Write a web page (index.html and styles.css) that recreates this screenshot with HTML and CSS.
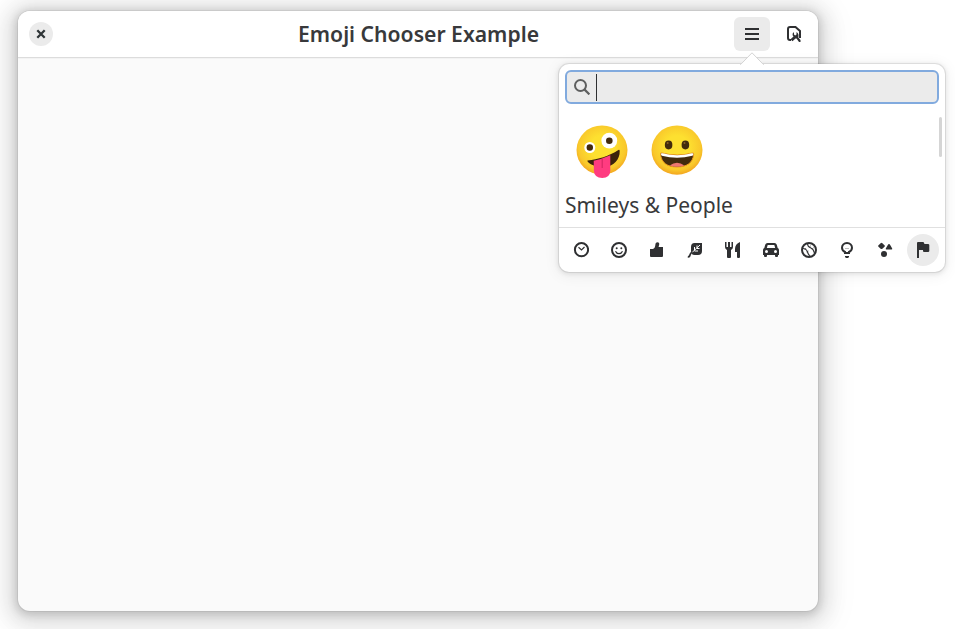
FILE: index.html
```html
<!DOCTYPE html>
<html lang="en">
<head>
<meta charset="utf-8">
<title>Emoji Chooser Example</title>
<link rel="stylesheet" href="styles.css">
</head>
<body>
<main class="window">
  <header class="headerbar">
    <button class="close" aria-label="Close"><svg width="16" height="16" viewBox="0 0 16 16"><path d="M4.300 4.300 11.700 11.700M11.700 4.300 4.300 11.700" stroke="#2e3436" stroke-width="2.300"/></svg></button>
    <h1 class="title">Emoji Chooser Example</h1>
    <div class="actions">
      <div class="menu">
        <button class="tool active" aria-label="Menu"><svg width="16" height="16" viewBox="0 0 16 16"><path d="M1 2h14v2H1zM1 7h14v2H1zM1 12h14v2H1z"/></svg></button>
        <section class="popover">
          <svg class="arrow" width="24" height="13" viewBox="0 0 24 13"><path d="M0 13 1 12 12 1 23 12 24 13z" fill="#fff"/><path d="M0 12.300H.8L12 .8 23.200 12.300h.8" fill="none" stroke="#d4d4d4"/><path d="M1.600 12.200h20.800V13H1.600z" fill="#fff"/></svg>
          <div class="search">
            <svg width="16" height="16" viewBox="0 0 16 16"><circle cx="6.500" cy="6.500" r="5.500" fill="none" stroke="#5e5f5f" stroke-width="2"/><path d="m10.400 10.400 5 5" stroke="#5e5f5f" stroke-width="2.200"/></svg>
            <span class="caret"></span>
          </div>
          <div class="content">
            <div class="emojis">
              <svg width="54" height="54" viewBox="0 0 54 54">
                <defs>
                  <radialGradient id="face" cx=".5" cy=".44" r=".58"><stop offset=".4" stop-color="#fde030"/><stop offset=".8" stop-color="#f9c82b"/><stop offset="1" stop-color="#f29f1d"/></radialGradient>
                </defs>
                <ellipse cx="27" cy="25.100" rx="25.500" ry="24.600" fill="url(#face)"/>
                <circle cx="14.800" cy="22.500" r="5.500" fill="#fff"/><circle cx="14.800" cy="22.500" r="3.200" fill="#422b0d"/>
                <circle cx="34.300" cy="15.700" r="7.900" fill="#fff"/><circle cx="34.300" cy="15.700" r="3.300" fill="#422b0d"/>
                <path d="M12.600 35.500C23 34.500 34 31.200 43.400 25Q44.600 24.500 44.700 25.900C45 34.500 38.500 41.600 29.500 41.600C20.500 42.100 14.500 39.500 12.300 36Z" fill="#3b220b"/>
                <path d="M18.700 35.700Q27 34 35.300 30.200V45.700Q35 52.800 27.300 53.100Q19.300 52.800 18.900 46Z" fill="#ff3b80"/><path d="M27.200 34v9" stroke="#d72865" stroke-width="1.200"/>
              </svg>
              <svg width="54" height="54" viewBox="0 0 54 54">
                <ellipse cx="27" cy="25.100" rx="25.500" ry="24.600" fill="url(#face)"/>
                <ellipse cx="18.600" cy="20" rx="3.800" ry="4.400" fill="#422b0d"/><ellipse cx="35.400" cy="20" rx="3.800" ry="4.400" fill="#422b0d"/>
                <circle cx="17.700" cy="18" r="1" fill="#896024"/><circle cx="34.500" cy="18" r="1" fill="#896024"/>
                <path d="M10.500 28.500Q10.500 27.700 12 28Q27 32 42.500 28Q43.800 27.700 43.700 29.200C43 38 36.500 42 27 42C17.500 42 11 37.800 10.500 28.500Z" fill="#422b0d" stroke="#ed971c"/>
                <path d="M10.800 28.800Q11 28 12.500 28.300Q27 32 41.900 28.300Q43.400 28 43.300 29.200Q43.200 30.500 42.300 30.700Q27 34.700 11.800 30.700Q11 30 10.800 28.800Z" fill="#fff"/>
                <path d="M19.700 40.600Q27 34.700 34.400 40.600Q27 43 19.700 40.600Z" fill="#ed7770"/>
              </svg>
            </div>
            <h2 class="section-title">Smileys &amp; People</h2>
            <span class="scrollbar"></span>
          </div>
          <nav class="categories">
            <button class="category" aria-label="Recent"><svg width="16" height="16" viewBox="0 0 16 16"><circle cx="8.500" cy="7.700" r="6.600" fill="none" stroke="#2f3032" stroke-width="2"/><path d="m5.500 5.300 3 2.700 3-3" fill="none" stroke="#2f3032" stroke-width="1.200"/></svg></button>
            <button class="category" aria-label="Smileys"><svg width="16" height="16" viewBox="0 0 16 16"><circle cx="8" cy="8" r="7" fill="none" stroke="#2f3032" stroke-width="2"/><circle cx="5.700" cy="6.200" r="1"/><circle cx="10.300" cy="6.200" r="1"/><path d="M4.500 9.300Q5.500 11.700 8 11.700T11.500 9.300" fill="none" stroke="#2f3032" stroke-width="1.200"/></svg></button>
            <button class="category" aria-label="Body"><svg width="16" height="16" viewBox="0 0 16 16"><path d="M1 7h2.800C5.500 6.400 6 5.200 6.300 3.200 6.500 1.200 7 .4 8.500.3c1.500 0 1.900 1 1.700 2.300L9.600 5H14v9q0 1-1 1H2q-1 0-1-1z"/></svg></button>
            <button class="category" aria-label="Nature"><svg width="16" height="16" viewBox="0 0 16 16"><path d="M4 5Q4 1 7.500 1H15v8q0 4-4 4H7.500Q4 13 4 9z"/><path d="M13 3 4.500 11M7.500 8.500V5M10 6V3.500M7.500 9h3.500M10 6.500h2.500" fill="none" stroke="#fff"/><path d="M5.500 10Q3.300 11 3 13T.8 14.800" fill="none" stroke="#2f3032" stroke-width="1.700"/></svg></button>
            <button class="category" aria-label="Food"><svg width="16" height="16" viewBox="0 0 16 16"><path d="M0 0h1.500v5H3V0h2v5h1.500V0H8v5Q8 7 6 8v7q0 1-1 1H3q-1 0-1-1V8Q0 7 0 5zM15 0v15q0 1-1 1h-1q-1 0-1-1v-5h-2V7q0-5 5-7z"/></svg></button>
            <button class="category" aria-label="Travel"><svg width="16" height="16" viewBox="0 0 16 16"><path fill-rule="evenodd" d="M4.500 1h7q1.700 0 2.300 1.800L14.700 6Q16 6.500 16 8v5h-1v1q0 1-1 1h-1q-1 0-1-1v-1H4v1q0 1-1 1H2q-1 0-1-1v-1H0V8q0-1.500 1.300-2l.9-3.200Q2.800 1 4.500 1ZM4.700 3 3.800 6h8.400l-.9-3zM3.500 8a1.500 1.500 0 1 0 0 3 1.500 1.500 0 0 0 0-3Zm9 0a1.500 1.500 0 1 0 0 3 1.500 1.500 0 0 0 0-3Z"/></svg></button>
            <button class="category" aria-label="Activities"><svg width="16" height="16" viewBox="0 0 16 16"><g fill="none" stroke="#2f3032"><circle cx="8" cy="8" r="7" stroke-width="2"/><path d="M6.500 1.500Q6.500 4.500 9.500 5.800T13.500 11M1.500 6.500Q5.500 6.500 6.500 10T9.500 14.500" stroke-width="1.100"/><path d="M9.500 3.500 8.500 5.500M12.500 5.500l-1.200 1.500M5 6l-1.200 1.500M7.500 9l-2 1" stroke-width=".6"/></g></svg></button>
            <button class="category" aria-label="Objects"><svg width="16" height="16" viewBox="0 0 16 16"><path d="M6 11V10Q3 8.600 3 5.800C3 3 5 1 8 1s5 2 5 4.800Q13 8.600 10 10v1z" fill="none" stroke="#2f3032" stroke-width="2"/><path d="M7 8h2v3H7z" fill="#fff"/><path d="M6 10h4v2H6zM6 14h4v1l-1 1H7l-1-1z"/><path d="m6 6 1 1 1-1 1 1 1-1" fill="none" stroke="#aaa" stroke-width=".8"/></svg></button>
            <button class="category" aria-label="Symbols"><svg width="16" height="16" viewBox="0 0 16 16"><path d="M4.500.7q.5 0 .9.500l2.300 2.200q.5.500 0 1L5.400 6.700q-.9.800-1.800 0L1.300 4.400q-.5-.5 0-1L3.600 1.200Q4 .7 4.500.7ZM12 2q.6 0 .9.500l2.300 4q.3 1-.6 1H9.400q-.9 0-.6-1l2.300-4Q11.400 2 12 2Z"/><circle cx="7" cy="12" r="3"/></svg></button>
            <button class="category selected" aria-label="Flags"><svg width="16" height="16" viewBox="0 0 16 16"><path d="M2 1q0-1 1-1h5q1 0 1 1h0q0 1 1 1h3q1.300 0 1.300 1v6q0 1-1.300 1H9Q8 10 8 9V8H4v8H2z"/></svg></button>
          </nav>
        </section>
      </div>
      <button class="tool" aria-label="Inspect"><svg width="16" height="16" viewBox="0 0 16 16"><path d="M5 14H4Q2 14 2 12V3Q2 1 4 1h5.500L14 5v7" fill="none" stroke="#2f3032" stroke-width="2"/><path d="M8 6Q6 7.500 6.600 9.200L7.500 10.500 4.500 13.300 6.500 15.300 9.500 12.400H10.500L13 16H14.500V14L12.300 11.500Q13.300 7.500 10.500 6V8.500L9.200 9.500 8 8.500z"/></svg></button>
    </div>
  </header>
</main>
</body>
</html>
```
FILE: styles.css
```css
* { box-sizing: border-box; }
body {
  margin: 0;
  padding: 11px 0 0 18px;
  height: 629px;
  overflow: hidden;
  background: #fff;
  color: #38393b;
  font-family: "Noto Sans", sans-serif;
}
svg { display: block; fill: #2f3032; flex: none; }
button {
  display: flex;
  align-items: center;
  justify-content: center;
  padding: 0;
  border: 0;
  background: transparent;
}
.window {
  width: 800px;
  height: 600px;
  border-radius: 12px;
  background: #fafafa;
  box-shadow: 0 0 0 1px rgba(0,0,0,.05), 0 2px 8px 2px rgba(0,0,0,.15), 0 3px 20px 10px rgba(0,0,0,.1), 0 6px 32px 16px rgba(0,0,0,.04);
}
.headerbar {
  display: grid;
  grid-template-columns: 1fr auto 1fr;
  align-items: center;
  height: 47px;
  padding: 0 6px 0 11px;
  border-bottom: 1px solid #dcdcdc;
  border-radius: 12px 12px 0 0;
  background: #fff;
  box-shadow: 0 1px 1px rgba(0,0,0,.03);
}
.close { width: 24px; height: 24px; border-radius: 50%; background: #ebebeb; }
.title {
  width: 241px;
  margin: 0 0 0 -4px;
  font-size: 21.150px;
  line-height: 30px;
  font-weight: 600;
  white-space: nowrap;
}
.actions { display: flex; justify-content: flex-end; gap: 6px; }
.menu { position: relative; }
.tool { width: 36px; height: 34px; border-radius: 6px; }
.active { background: #ebebeb; }
.popover {
  position: absolute;
  top: 47px;
  left: -175px;
  width: 386px;
  height: 208px;
  padding-top: 6px;
  border-radius: 10px;
  background: #fff;
  box-shadow: 0 0 0 1px rgba(0,0,0,.08), 0 1px 5px 1px rgba(0,0,0,.09), 0 2px 14px 3px rgba(0,0,0,.05);
}
.arrow { position: absolute; left: 181px; top: -12px; }
.search {
  display: flex;
  align-items: center;
  gap: 6px;
  height: 34px;
  margin: 0 6px;
  padding: 0 7px;
  border: 2px solid #81aade;
  border-radius: 6px;
  background: #ebebeb;
}
.caret { width: 1px; height: 27px; background: #2f3032; }
.content {
  position: relative;
  height: 123px;
  padding: 21px 6px 0;
}
.emojis { display: flex; gap: 21px; height: 65px; padding-left: 10px; }
.section-title {
  margin: 0;
  font-size: 21px;
  line-height: 30px;
  font-weight: 400;
  white-space: nowrap;
}
.scrollbar {
  position: absolute;
  top: 13px;
  right: 3px;
  width: 3px;
  height: 40px;
  border-radius: 2px;
  background: #d5d5d5;
}
.categories {
  display: flex;
  gap: 6px;
  height: 45px;
  padding: 6px;
  border-top: 1px solid #e0e0e0;
}
.category { width: 32px; height: 32px; border-radius: 50%; }
.selected { background: #ebebeb; }
```
